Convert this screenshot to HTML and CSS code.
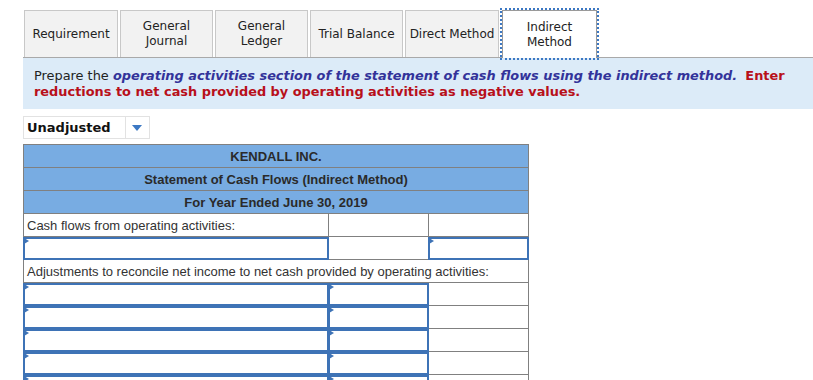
FILE: index.html
```html
<!DOCTYPE html>
<html lang="en">
<head>
    <meta charset="UTF-8">
    <title>Indirect Method</title>
    <link rel="stylesheet" href="styles.css">
</head>
<body>
    <div class="page">
        <div class="tabs">
            <div class="tab w94">Requirement</div>
            <div class="tab w93">General<br>Journal</div>
            <div class="tab w93">General<br>Ledger</div>
            <div class="tab w93">Trial Balance</div>
            <div class="tab w94">Direct Method</div>
            <div class="tab w95 active">Indirect<br>Method</div>
        </div>

        <div class="instructions">
            Prepare the <span class="task">operating activities section of the statement of cash flows using the indirect method.</span>&nbsp; <span class="warn">Enter reductions to net cash provided by operating activities as negative values.</span>
        </div>

        <div class="select">
            <span class="select-label">Unadjusted</span>
            <span class="select-arrow"></span>
        </div>

        <table class="sheet">
            <tr class="head"><td colspan="3">KENDALL INC.</td></tr>
            <tr class="head"><td colspan="3">Statement of Cash Flows (Indirect Method)</td></tr>
            <tr class="head"><td colspan="3">For Year Ended June 30, 2019</td></tr>
            <tr>
                <td class="label">Cash flows from operating activities:</td>
                <td></td>
                <td></td>
            </tr>
            <tr>
                <td><div class="entry"></div></td>
                <td></td>
                <td><div class="entry"></div></td>
            </tr>
            <tr>
                <td class="label" colspan="3">Adjustments to reconcile net income to net cash provided by operating activities:</td>
            </tr>
            <tr>
                <td><div class="entry"></div></td>
                <td><div class="entry"></div></td>
                <td></td>
            </tr>
            <tr>
                <td><div class="entry"></div></td>
                <td><div class="entry"></div></td>
                <td></td>
            </tr>
            <tr>
                <td><div class="entry"></div></td>
                <td><div class="entry"></div></td>
                <td></td>
            </tr>
            <tr>
                <td><div class="entry"></div></td>
                <td><div class="entry"></div></td>
                <td></td>
            </tr>
            <tr>
                <td><div class="entry"></div></td>
                <td><div class="entry"></div></td>
                <td></td>
            </tr>
        </table>
    </div>
</body>
</html>
```

FILE: styles.css
```css
body {
    margin: 0;
    background-color: #fff;
    color: #333;
    font-family: "DejaVu Sans", Verdana, sans-serif;
}
.page {
    padding-left: 23px;
    padding-top: 10px;
}
.tabs {
    display: flex;
    gap: 2px;
    height: 47px;
    border-bottom: 1px solid #a9a9a9;
    padding-left: 1px;
}
.tab {
    box-sizing: border-box;
    display: flex;
    align-items: center;
    justify-content: center;
    text-align: center;
    height: 47px;
    background-color: #f2f2f2;
    border: 1px solid #c8c8c8;
    border-bottom: none;
    font-size: 12px;
    line-height: 15px;
    color: #222;
}
.w93 { width: 93px; }
.w94 { width: 94px; }
.w95 { width: 95px; }
.tab.active {
    background-color: #fff;
    border-color: #9a9a9a;
    outline: 2px dotted #3c78c3;
    outline-offset: 0;
    height: 48px;
    margin-bottom: -1px;
    margin-left: 1px;
}
.instructions {
    background-color: #dcebf8;
    padding: 10px 11px 9px 11px;
    font-size: 12.9px;
    line-height: 16px;
    color: #222;
}
.task {
    color: #33339a;
    font-weight: bold;
    font-style: italic;
}
.warn {
    color: #b8101a;
    font-weight: bold;
}
.select {
    display: flex;
    align-items: center;
    width: 127px;
    height: 23px;
    box-sizing: border-box;
    border: 1px solid #e2e2e2;
    margin-top: 7px;
    font-weight: bold;
    font-size: 13px;
    color: #111;
}
.select-label {
    flex: 1;
    padding-left: 3px;
}
.select-arrow {
    width: 23px;
    height: 21px;
    border-left: 1px solid #e2e2e2;
    position: relative;
}
.select-arrow::after {
    content: "";
    position: absolute;
    left: 6px;
    top: 8px;
    border-left: 5px solid transparent;
    border-right: 5px solid transparent;
    border-top: 6px solid #3c78c3;
}
.sheet {
    border-collapse: collapse;
    margin-top: 5px;
    width: 506px;
    font-family: "Liberation Sans", Arial, sans-serif;
    font-size: 13px;
    color: #333;
}
.sheet td {
    border: 1px solid #808080;
    height: 23px;
    padding: 0;
    box-sizing: border-box;
    width: 100px;
}
.sheet td:first-child {
    width: 305px;
}
.head td {
    background-color: #78ace2;
    text-align: center;
    font-weight: bold;
    color: #2a2a2a;
}
.sheet td.label {
    padding-left: 3px;
}
.entry {
    position: relative;
    box-sizing: border-box;
    height: 23px;
    border: 2px solid #3e73b6;
    margin: -1px;
}
.entry::before {
    content: "";
    position: absolute;
    left: -1px;
    top: -1px;
    border-top: 3px solid transparent;
    border-bottom: 3px solid transparent;
    border-left: 5px solid #3e73b6;
}
```
